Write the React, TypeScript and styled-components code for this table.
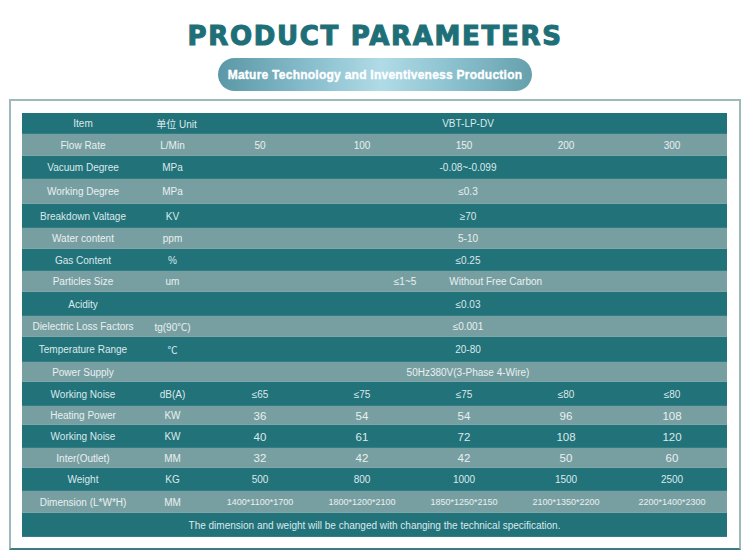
import styled, { createGlobalStyle } from 'styled-components'

const GlobalStyle = createGlobalStyle`
  html, body {
    margin: 0;
    padding: 0;
    background: #ffffff;
  }
  body {
    font-family: 'Liberation Sans', Arial, 'Noto Sans CJK SC', sans-serif;
  }
`

const Page = styled.div`
  width: 750px;
  height: 559px;
  display: flex;
  flex-direction: column;
  align-items: center;
  padding-top: 20px;
  box-sizing: border-box;
  overflow: hidden;
`

const Title = styled.h1`
  margin: 0;
  font-family: 'DejaVu Sans', 'Liberation Sans', sans-serif;
  font-weight: bold;
  font-size: 26px;
  line-height: 32px;
  letter-spacing: 1.7px;
  color: #1f6f78;
  -webkit-text-stroke: 1.1px #1f6f78;
`

const Pill = styled.div`
  margin-top: 6px;
  width: 314px;
  height: 33px;
  border-radius: 17px;
  display: flex;
  align-items: center;
  justify-content: center;
  background: linear-gradient(
    90deg,
    #5b97a6 0%,
    #86bccb 28%,
    #b0dbe6 52%,
    #8cc2cf 74%,
    #66a0ad 100%
  );
  color: #ffffff;
  font-weight: bold;
  font-size: 12px;
  letter-spacing: 0.25px;
  -webkit-text-stroke: 0.35px #ffffff;
`

const Frame = styled.div`
  margin-top: 8px;
  width: 732px;
  box-sizing: border-box;
  border: 2px solid #9cb9bd;
  border-bottom-color: #3f7a80;
  padding: 12px 12px 11px 11px;
`

const Table = styled.div`
  display: flex;
  flex-direction: column;
  width: 705px;
`

const Row = styled.div<{ $dark: boolean; $h: number }>`
  display: grid;
  grid-template-columns: 122px 65px 102px 102px 102px 102px 110px;
  height: ${({ $h }) => $h}px;
  background: ${({ $dark }) => ($dark ? '#22727a' : '#779fa2')};
  color: ${({ $dark }) => ($dark ? '#dce9ea' : '#e9f0f0')};
  box-shadow: inset 0 -1px 0 rgba(255, 255, 255, 0.08);
`

const Cell = styled.div<{ $size?: number; $span?: number; $shift?: number }>`
  display: flex;
  align-items: center;
  justify-content: center;
  gap: 33px;
  font-size: ${({ $size }) => $size ?? 10}px;
  white-space: nowrap;
  grid-column: ${({ $span }) => ($span ? `span ${$span}` : 'auto')};
  padding-right: ${({ $shift }) => $shift ?? 0}px;
`

type RowData = {
  item: string
  unit?: string
  values?: string[]
  span?: string[]
  note?: string
  h: number
  size?: number
}

const rows: RowData[] = [
  { item: 'Item', unit: '单位 Unit', span: ['VBT-LP-DV'], h: 21 },
  { item: 'Flow Rate', unit: 'L/Min', values: ['50', '100', '150', '200', '300'], h: 22 },
  { item: 'Vacuum Degree', unit: 'MPa', span: ['-0.08~-0.099'], h: 23 },
  { item: 'Working Degree', unit: 'MPa', span: ['≤0.3'], h: 25 },
  { item: 'Breakdown Valtage', unit: 'KV', span: ['≥70'], h: 24 },
  { item: 'Water content', unit: 'ppm', span: ['5-10'], h: 21 },
  { item: 'Gas Content', unit: '%', span: ['≤0.25'], h: 22 },
  { item: 'Particles Size', unit: 'um', span: ['≤1~5', 'Without Free Carbon'], h: 21 },
  { item: 'Acidity', unit: '', span: ['≤0.03'], h: 24 },
  { item: 'Dielectric Loss Factors', unit: 'tg(90℃)', span: ['≤0.001'], h: 21 },
  { item: 'Temperature Range', unit: '℃', span: ['20-80'], h: 25 },
  { item: 'Power Supply', unit: '', span: ['50Hz380V(3-Phase 4-Wire)'], h: 20 },
  { item: 'Working Noise', unit: 'dB(A)', values: ['≤65', '≤75', '≤75', '≤80', '≤80'], h: 24 },
  { item: 'Heating Power', unit: 'KW', values: ['36', '54', '54', '96', '108'], h: 19, size: 11.5 },
  { item: 'Working Noise', unit: 'KW', values: ['40', '61', '72', '108', '120'], h: 23, size: 11.5 },
  { item: 'Inter(Outlet)', unit: 'MM', values: ['32', '42', '42', '50', '60'], h: 20, size: 11.5 },
  { item: 'Weight', unit: 'KG', values: ['500', '800', '1000', '1500', '2500'], h: 23 },
  {
    item: 'Dimension (L*W*H)',
    unit: 'MM',
    values: ['1400*1100*1700', '1800*1200*2100', '1850*1250*2150', '2100*1350*2200', '2200*1400*2300'],
    h: 22,
    size: 9,
  },
  {
    item: '',
    note: 'The dimension and weight will be changed with changing the technical specification.',
    h: 24,
  },
]

const App = () => {
  return (
    <Page>
      <GlobalStyle />
      <Title>PRODUCT PARAMETERS</Title>
      <Pill>Mature Technology and Inventiveness Production</Pill>
      <Frame>
        <Table>
          {rows.map((r, i) => (
            <Row key={i} $dark={i % 2 === 0} $h={r.h}>
              {r.note ? (
                <Cell $span={7}>{r.note}</Cell>
              ) : (
                <>
                  <Cell>{r.item}</Cell>
                  <Cell $shift={i === 0 ? 0 : 8}>{r.unit}</Cell>
                  {r.values &&
                    r.values.map((v, j) => (
                      <Cell key={j} $size={r.size}>
                        {v}
                      </Cell>
                    ))}
                  {r.span && (
                    <Cell $span={5}>
                      {r.span.map((s, j) => (
                        <span key={j}>{s}</span>
                      ))}
                    </Cell>
                  )}
                </>
              )}
            </Row>
          ))}
        </Table>
      </Frame>
    </Page>
  )
}

export default App
